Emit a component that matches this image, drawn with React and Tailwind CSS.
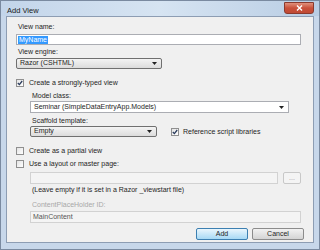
const Check = ({ checked }) => (
  <span className="w-[8px] h-[8px] border border-[#8f8f8f] bg-gradient-to-br from-[#e4e4e4] to-[#ffffff] flex items-center justify-center shrink-0">
    {checked && (
      <svg width="6" height="6" viewBox="0 0 6 6">
        <path d="M0.8 3 L2.4 4.6 L5.2 1" stroke="#2a3b5c" strokeWidth="1.3" fill="none" />
      </svg>
    )}
  </span>
);

const Arrow = () => (
  <svg width="5" height="3" viewBox="0 0 5 3" className="shrink-0">
    <path d="M0 0 L5 0 L2.5 3 Z" fill="#222" />
  </svg>
);

const Select = ({ text, className }) => (
  <div className={`h-[11px] border border-[#707070] rounded-[2px] bg-gradient-to-b from-[#f4f4f4] to-[#dcdcdc] flex items-center justify-between pl-[3px] pr-[4px] ${className}`}>
    <span>{text}</span>
    <Arrow />
  </div>
);

const Label = ({ children, className = '' }) => (
  <div className={`h-[8px] leading-[8px] ${className}`}>{children}</div>
);

export default function App() {
  return (
    <div
      className="w-[320px] h-[250px] bg-[#c7d7ea] border border-[#7a8aa0] flex flex-col text-[7px] text-[#1e1e1e]"
      style={{ fontFamily: '"Liberation Sans", Arial, sans-serif' }}
    >
      <div className="h-[15px] flex items-start justify-between bg-gradient-to-r from-[#c3d5ea] via-[#d6e4f2] to-[#b9cde4]">
        <span className="mt-[4px] ml-[6px] text-[7.5px] text-[#1a1a1a]">Add View</span>
        <div className="w-[30px] h-[12px] mt-[1px] mr-[5px] rounded-b-[3px] border border-[#8a3a2e] bg-gradient-to-b from-[#e0907c] via-[#c9503a] to-[#c04a35] flex items-center justify-center">
          <svg width="7" height="6" viewBox="0 0 7 6">
            <path d="M1 0.5 L6 5.5 M6 0.5 L1 5.5" stroke="#fff" strokeWidth="1.4" />
          </svg>
        </div>
      </div>

      <div className="flex-1 mx-[5px] mb-[6px] border border-[#8d9db3] bg-[#f0f0f0] flex flex-col pl-[9px] pr-[12px]">
        <Label className="mt-[6px] ml-[2px]">View name:</Label>
        <div className="mt-[3px] h-[11px] border border-[#abadb3] bg-white flex items-center pl-[1px]">
          <span className="bg-[#3399ff] text-white leading-[8px] px-[1px]">MyName</span>
        </div>
        <Label className="mt-[3px] ml-[2px]">View engine:</Label>
        <Select text="Razor (CSHTML)" className="mt-[2px] w-[146px]" />

        <div className="mt-[10px] flex items-center gap-[5px]">
          <Check checked />
          <span className="leading-[8px]">Create a strongly-typed view</span>
        </div>

        <div className="pl-[14px] pr-[12px] flex flex-col">
          <Label className="mt-[5px] ml-[2px]">Model class:</Label>
          <Select text="Seminar (SimpleDataEntryApp.Models)" className="mt-[1px] h-[12px] bg-none bg-white border-[#abadb3] rounded-none" />
          <Label className="mt-[4px] ml-[2px]">Scaffold template:</Label>
          <div className="mt-[1px] flex items-center">
            <Select text="Empty" className="w-[127px]" />
            <div className="ml-[14px] flex items-center gap-[4px]">
              <Check checked />
              <span className="leading-[8px]">Reference script libraries</span>
            </div>
          </div>
        </div>

        <div className="mt-[10px] flex items-center gap-[5px]">
          <Check />
          <span className="leading-[8px]">Create as a partial view</span>
        </div>
        <div className="mt-[5px] flex items-center gap-[5px]">
          <Check />
          <span className="leading-[8px]">Use a layout or master page:</span>
        </div>

        <div className="pl-[14px] flex flex-col">
          <div className="mt-[4px] flex items-center gap-[5px]">
            <div className="flex-1 h-[12px] border border-[#d2d2d2] bg-[#f4f4f4]" />
            <div className="w-[18px] h-[12px] border border-[#c8c8c8] rounded-[2px] bg-[#f4f4f4] flex items-center justify-center text-[#a0a0a0] leading-[8px]">...</div>
          </div>
          <Label className="mt-[2px] ml-[2px]">(Leave empty if it is set in a Razor _viewstart file)</Label>
          <Label className="mt-[7px] ml-[2px] text-[#a8a8a8]">ContentPlaceHolder ID:</Label>
          <div className="mt-[2px] h-[12px] border border-[#d2d2d2] bg-[#f4f4f4] flex items-center pl-[2px] text-[#555]">MainContent</div>
        </div>

        <div className="mt-[5px] flex justify-end gap-[4px]">
          <div className="w-[52px] h-[12px] border border-[#3c7fb1] rounded-[2px] bg-gradient-to-b from-[#eaf6fd] to-[#a7d9f5] flex items-center justify-center leading-[8px]">Add</div>
          <div className="w-[52px] h-[12px] border border-[#8c8c8c] rounded-[2px] bg-gradient-to-b from-[#f2f2f2] to-[#d4d4d4] flex items-center justify-center leading-[8px] mr-[-3px]">Cancel</div>
        </div>
      </div>
    </div>
  );
}
